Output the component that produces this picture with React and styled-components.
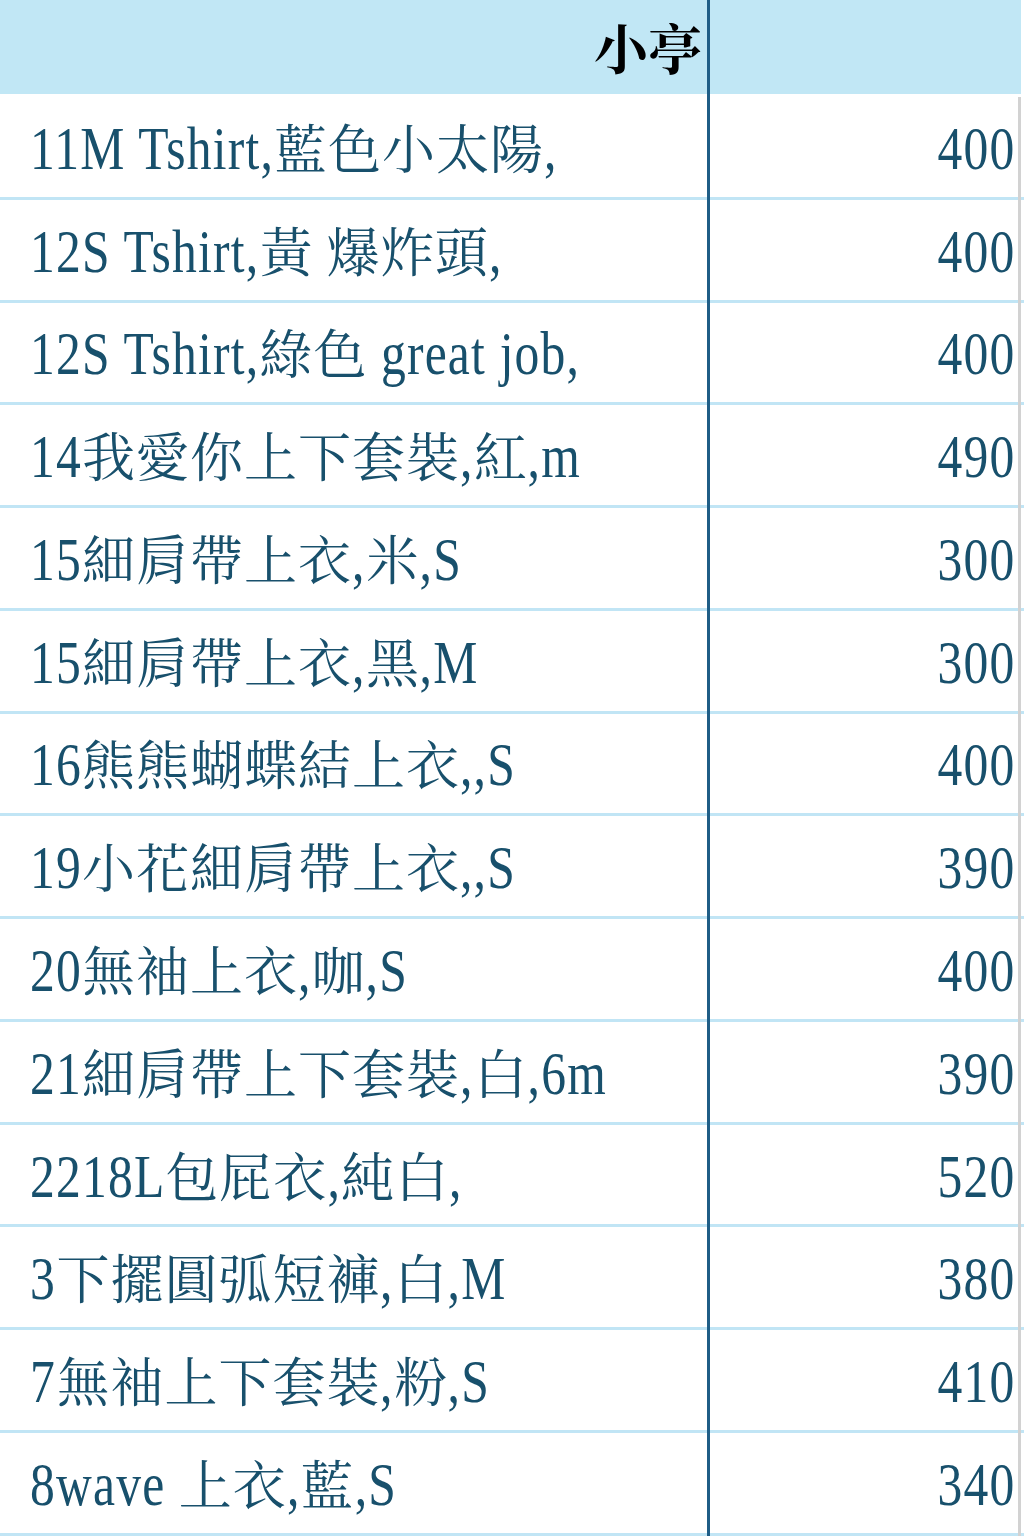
import React from "react";
import styled, { createGlobalStyle } from "styled-components";

const Global = createGlobalStyle`
  html, body { margin: 0; padding: 0; background: #ffffff; }
  body { width: 1024px; }
`;

const DIVIDER = "#1f5d86";
const LINE = "#c1e5f5";
const HEAD_BG = "#c1e7f5";
const INK = "#18506c";
const GREY = "#d2d2d2";
const SCALE = 0.8;
const HAN_SIZE = 53;
const HAN_GAP = 1;

const Sheet = styled.div`
  width: 1024px;
  display: flex;
  flex-direction: column;
`;

const Row = styled.div`
  display: grid;
  grid-template-columns: 710px 311px 1fr;
  height: ${(p) => p.$h}px;
  box-sizing: border-box;
  border-bottom: 3px solid ${(p) => p.$line};
`;

const Cell = styled.div`
  position: relative;
  display: flex;
  align-items: center;
  justify-content: ${(p) => (p.$right ? "flex-end" : "flex-start")};
  background: ${(p) => p.$bg || "transparent"};
  padding: ${(p) => p.$pad};
  box-sizing: border-box;
  overflow: visible;
  &::after {
    content: "";
    display: ${(p) => (p.$rule ? "block" : "none")};
    position: absolute;
    top: 0;
    right: 0;
    bottom: -3px;
    width: 3px;
    background: ${(p) => p.$rule};
  }
`;

const HeadText = styled.span`
  font-family: "Noto Serif CJK TC", "Noto Sans CJK TC", serif;
  font-weight: 700;
  font-size: 54px;
  color: #000;
  line-height: 1;
`;

const Text = styled.span`
  display: inline-block;
  white-space: nowrap;
  font-family: "Liberation Serif", "Noto Serif CJK TC", "Noto Sans CJK TC", serif;
  font-size: 62px;
  line-height: 1;
  letter-spacing: 1.5px;
  color: ${INK};
  transform: scaleX(${SCALE});
  transform-origin: ${(p) => (p.$right ? "right" : "left")} center;
`;

/* CJK runs are drawn at their natural width inside the condensed Latin line */
const Han = styled.span`
  display: inline-block;
  font-family: "Noto Serif CJK TC", "Noto Sans CJK TC", serif;
  font-size: ${HAN_SIZE}px;
  font-weight: 400;
  letter-spacing: ${HAN_GAP}px;
  transform: scaleX(${1 / SCALE});
  transform-origin: left center;
  margin-right: ${(p) => p.$n * (HAN_SIZE + HAN_GAP) * (1 / SCALE - 1)}px;
`;

const HAN_RE = /([\u3400-\u9fff]+)/;

const splitHan = (s) =>
  s
    .split(HAN_RE)
    .filter(Boolean)
    .map((part, i) =>
      HAN_RE.test(part) ? (
        <Han key={i} $n={[...part].length}>
          {part}
        </Han>
      ) : (
        <React.Fragment key={i}>{part}</React.Fragment>
      )
    );

const rows = [
  ["11M Tshirt,藍色小太陽,", 400],
  ["12S Tshirt,黃 爆炸頭,", 400],
  ["12S Tshirt,綠色 great job,", 400],
  ["14我愛你上下套裝,紅,m", 490],
  ["15細肩帶上衣,米,S", 300],
  ["15細肩帶上衣,黑,M", 300],
  ["16熊熊蝴蝶結上衣,,S", 400],
  ["19小花細肩帶上衣,,S", 390],
  ["20無袖上衣,咖,S", 400],
  ["21細肩帶上下套裝,白,6m", 390],
  ["2218L包屁衣,純白,", 520],
  ["3下擺圓弧短褲,白,M", 380],
  ["7無袖上下套裝,粉,S", 410],
  ["8wave 上衣,藍,S", 340],
];

export default function App() {
  return (
    <>
      <Global />
      <Sheet>
        <Row $h={97} $line="#ffffff">
          <Cell $right $bg={HEAD_BG} $pad="0 8px 0 0" $rule={DIVIDER}>
            <HeadText>小亭</HeadText>
          </Cell>
          <Cell $bg={HEAD_BG} />
          <Cell />
        </Row>
        {rows.map(([name, price], i) => (
          <Row key={i} $h={102.77} $line={LINE}>
            <Cell $pad="2px 0 0 30px" $rule={DIVIDER}>
              <Text>{splitHan(name)}</Text>
            </Cell>
            <Cell $right $pad="2px 6px 0 0" $rule={GREY}>
              <Text $right>{price}</Text>
            </Cell>
            <Cell />
          </Row>
        ))}
      </Sheet>
    </>
  );
}
